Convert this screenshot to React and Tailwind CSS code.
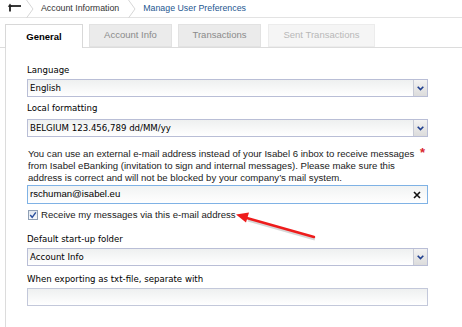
import React from "react";

const sans = { fontFamily: '"Liberation Sans", Arial, sans-serif' };
const tah = { fontFamily: '"DejaVu Sans", Verdana, sans-serif' };

function Chevron() {
  return (
    <svg width="10" height="18" viewBox="0 0 10 18" className="shrink-0">
      <path d="M1.5 0 L8 9 L1.5 18" fill="none" stroke="#d6d6d6" strokeWidth="1" />
    </svg>
  );
}

function Select({ value, className = "" }) {
  return (
    <div className={"flex h-[18px] w-[401px] border border-[#b9bed6] bg-gradient-to-b from-[#eef0f0] to-white " + className}>
      <div className="flex-1 pl-[2px] text-[8.6px] leading-[16px] text-black" style={tah}>{value}</div>
      <div className="flex w-[14px] items-center justify-center border-l border-[#c8cbd6] bg-gradient-to-b from-[#f2f2f2] to-[#dcdcdc]">
        <svg width="7" height="5" viewBox="0 0 7 5">
          <path d="M0.7 0.8 L3.5 3.6 L6.3 0.8" fill="none" stroke="#1f3f8f" strokeWidth="1.6" />
        </svg>
      </div>
    </div>
  );
}

export default function App() {
  return (
    <div className="relative h-[327px] w-[462px] overflow-hidden bg-white" style={sans}>
      {/* breadcrumb */}
      <div className="flex h-[18px] items-center border-b border-[#e3e3e3]">
        <svg width="22" height="18" viewBox="0 0 22 18" className="ml-[3px] shrink-0">
          <path d="M6 6 H18" stroke="#222" strokeWidth="1.8" />
          <path d="M7 5 V11.5" stroke="#222" strokeWidth="1.8" />
          <path d="M4.8 6.8 L7 3.6 L9.2 6.8 Z" fill="#222" />
        </svg>
        <Chevron />
        <span className="ml-[6px] text-[8.8px] text-[#333]">Account Information</span>
        <div className="ml-[8px]"><Chevron /></div>
        <span className="ml-[6px] text-[8.8px] text-[#1d5791]">Manage User Preferences</span>
      </div>

      {/* tabs */}
      <div className="mt-[6px] flex items-end border-b border-[#dcdcdc] pl-[5px]">
        <div className="-mb-px flex h-[24px] w-[78px] items-center justify-center border border-b-0 border-[#d8d8d8] bg-white pt-[1px] text-[9.5px] font-bold text-black">General</div>
        <div className="ml-[6px] flex h-[23px] w-[83px] items-center justify-center border border-[#e2e2e2] bg-[#ebebeb] text-[9.5px] text-[#8a8a8a]">Account Info</div>
        <div className="ml-[6px] flex h-[23px] w-[83px] items-center justify-center border border-[#e2e2e2] bg-[#ebebeb] text-[9.5px] text-[#8a8a8a]">Transactions</div>
        <div className="ml-[7px] flex h-[23px] w-[107px] items-center justify-center border border-[#ececec] bg-[#f5f5f5] text-[9.5px] text-[#b8b8b8]">Sent Transactions</div>
      </div>

      {/* panel */}
      <div className="ml-[5px] h-[300px] border-l border-[#dcdcdc] pl-[21px]">
        <div className="pt-[16px] text-[8.6px] leading-[12px] text-black" style={tah}>Language</div>
        <Select value="English" className="mt-[3px]" />
        <div className="mt-[5px] text-[8.6px] leading-[12px] text-black" style={tah}>Local formatting</div>
        <Select value="BELGIUM 123.456,789 dd/MM/yy" className="mt-[5px]" />

        <div className="relative mt-[11px] w-[392px] pl-[1px] text-[9.6px] leading-[12px] text-[#222]">
          You can use an external e-mail address instead of your Isabel 6 inbox to receive messages from Isabel eBanking (invitation to sign and internal messages). Please make sure this address is correct and will not be blocked by your company’s mail system.
          <span className="absolute left-[393px] top-[-1px] text-[13px] font-bold leading-[12px] text-[#d9272e]">*</span>
        </div>

        <div className="mt-[1px] flex h-[19px] w-[401px] items-center border border-[#7fb2e5] bg-gradient-to-b from-[#f1f3f3] to-white pl-[2px] pr-[6px]">
          <span className="flex-1 text-[9.6px] text-black">rschuman@isabel.eu</span>
          <svg width="8" height="8" viewBox="0 0 8 8">
            <path d="M1 1 L7 7 M7 1 L1 7" stroke="#111" strokeWidth="1.6" />
          </svg>
        </div>

        <div className="mt-[5px] flex h-[12px] items-center">
          <div className="ml-[1px] flex h-[10px] w-[10px] items-center justify-center border border-[#8f9fb5] bg-gradient-to-b from-[#dfe6ef] to-[#f7f9fb]">
            <svg width="8" height="8" viewBox="0 0 8 8">
              <path d="M1.2 4 L3.2 6.3 L6.8 1.3" fill="none" stroke="#2a4f9e" strokeWidth="1.4" />
            </svg>
          </div>
          <span className="ml-[3px] text-[9.6px] text-[#222]">Receive my messages via this e-mail address</span>
        </div>

        <div className="mt-[12px] text-[8.6px] leading-[12px] text-black" style={tah}>Default start-up folder</div>
        <Select value="Account Info" className="mt-[3px]" />
        <div className="mt-[7px] text-[8.6px] leading-[12px] text-black" style={tah}>When exporting as txt-file, separate with</div>
        <div className="mt-[3px] h-[18px] w-[401px] border border-[#c3c8da] bg-gradient-to-b from-[#eef0f0] to-white" />
      </div>

      {/* annotation arrow */}
      <svg className="absolute left-0 top-0" width="462" height="327" viewBox="0 0 462 327">
        <path d="M315 239 L248 220" stroke="#777" strokeOpacity="0.3" strokeWidth="3" />
        <path d="M314 237 L245 217.5" stroke="#ee1c1c" strokeWidth="2.4" strokeLinecap="round" />
        <path d="M236 214.5 L249 212.5 L246 222.5 Z" fill="#ee1c1c" />
      </svg>
    </div>
  );
}
